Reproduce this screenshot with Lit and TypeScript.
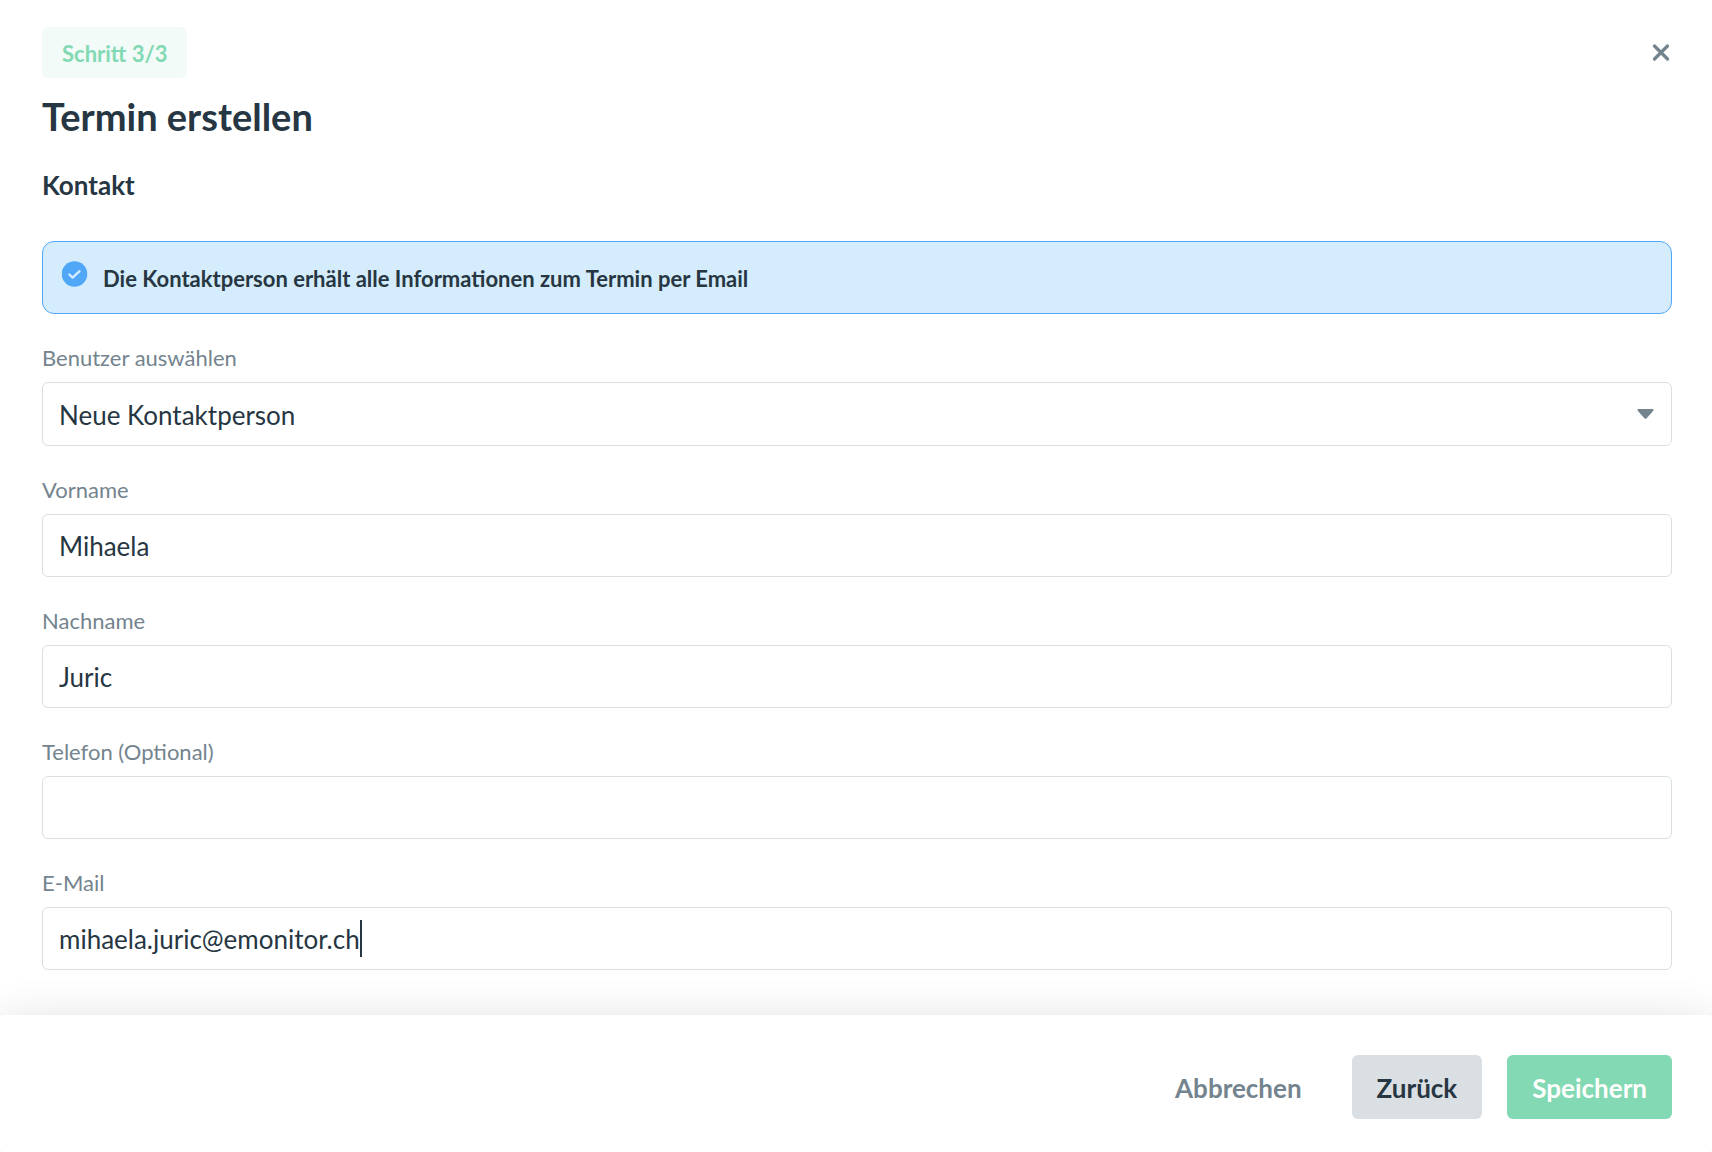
import { LitElement, html, css, nothing } from "lit";
import { customElement, property } from "lit/decorators.js";

@customElement("text-field")
class TextField extends LitElement {
  @property() label = "";
  @property() name = "";
  @property() type = "text";
  @property() value = "";
  @property({ type: Boolean }) active = false;

  static styles = css`
    :host {
      display: block;
    }
    .label {
      display: block;
      margin-bottom: 8px;
      font-size: 22px;
      line-height: 32px;
      color: #74848e;
    }
    .box {
      display: flex;
      align-items: center;
      box-sizing: border-box;
      height: 63px;
      padding: 0 16px;
      border: 1px solid #d9dfe3;
      border-radius: 6px;
      background: #fff;
    }
    .input {
      flex: 1;
      min-width: 0;
      padding: 0;
      border: 0;
      outline: 0;
      background: transparent;
      font: inherit;
      font-size: 26px;
      line-height: 36px;
      color: #263642;
    }
    .input.active {
      flex: 0 1 auto;
      field-sizing: content;
      caret-color: transparent;
    }
    .caret {
      flex: none;
      width: 2px;
      height: 37px;
      background: #263642;
    }
  `;

  render() {
    return html`
      <label class="label" for="control">${this.label}</label>
      <div class="box">
        <input
          id="control"
          class="input ${this.active ? "active" : ""}"
          type=${this.type}
          name=${this.name}
          .value=${this.value}
        />
        ${this.active ? html`<span class="caret"></span>` : nothing}
      </div>
    `;
  }
}

@customElement("app-root")
class AppRoot extends LitElement {
  static styles = css`
    :host {
      display: flex;
      flex-direction: column;
      min-height: 100vh;
      background: #fff;
      color: #263642;
      font-family: Lato, Carlito, "Open Sans", sans-serif;
    }
    .content {
      flex: 1;
      padding: 27px 40px 44px 42px;
    }
    .top {
      display: flex;
      justify-content: space-between;
      align-items: center;
    }
    .step {
      padding: 2px 20px 0;
      border-radius: 6px;
      background: #f2fbf8;
      color: #82d9b3;
      font-size: 22px;
      font-weight: 700;
      line-height: 49px;
    }
    .close {
      display: flex;
      padding: 0;
      border: 0;
      background: none;
      cursor: pointer;
    }
    .title {
      margin: 13px 0 0;
      font-size: 38px;
      font-weight: 700;
      line-height: 50px;
    }
    .subtitle {
      margin: 26px 0 0;
      font-size: 26px;
      font-weight: 700;
      line-height: 36px;
    }
    .notice {
      display: flex;
      align-items: flex-start;
      gap: 15px;
      margin-top: 38px;
      padding: 19px 19px 17px;
      border: 1px solid #50a7f8;
      border-radius: 12px;
      background: #d5ecfd;
      font-size: 22px;
      font-weight: 700;
      line-height: 35px;
    }
    .notice-icon {
      flex: none;
    }
    .form {
      display: grid;
      gap: 28px;
      margin-top: 28px;
    }
    .label {
      display: block;
      margin-bottom: 8px;
      font-size: 22px;
      line-height: 32px;
      color: #74848e;
    }
    .select-box {
      display: grid;
      align-items: center;
    }
    .select {
      grid-area: 1 / 1;
      appearance: none;
      width: 100%;
      height: 64px;
      padding: 2px 48px 0 16px;
      border: 1px solid #d9dfe3;
      border-radius: 6px;
      background: #fff;
      font: inherit;
      font-size: 26px;
      color: #263642;
    }
    .arrow {
      grid-area: 1 / 1;
      justify-self: end;
      margin-right: 18px;
      pointer-events: none;
    }
    .footer {
      display: flex;
      flex-wrap: wrap;
      justify-content: flex-end;
      gap: 25px;
      padding: 40px 40px 33px;
      border-radius: 4px;
      background: #fff;
      box-shadow: 0 0 40px rgba(0, 0, 0, 0.11);
    }
    .button {
      height: 64px;
      padding: 2px 25px 0;
      border: 0;
      border-radius: 6px;
      font: inherit;
      font-size: 26px;
      font-weight: 700;
      cursor: pointer;
    }
    .plain {
      background: none;
      color: #74848e;
    }
    .secondary {
      background: #dadfe3;
      color: #263642;
    }
    .primary {
      background: #82d9b3;
      color: #fff;
    }
  `;

  render() {
    return html`
      <main class="content">
        <div class="top">
          <span class="step">Schritt 3/3</span>
          <button class="close" type="button" aria-label="Schliessen">
            <svg width="22" height="22" viewBox="0 0 22 22">
              <path d="M4.5 4 17.5 17M17.5 4 4.5 17" stroke="#74848e" stroke-width="3.3" stroke-linecap="round" />
            </svg>
          </button>
        </div>
        <h1 class="title">Termin erstellen</h1>
        <h2 class="subtitle">Kontakt</h2>
        <div class="notice">
          <svg class="notice-icon" width="26" height="26" viewBox="0 0 26 26">
            <circle cx="12.5" cy="13" r="12.8" fill="#50a7f8" />
            <path d="M7.4 13.5 10.6 16.6 17.6 10.2" fill="none" stroke="#d5ecfd" stroke-width="2.3" stroke-linecap="round" stroke-linejoin="round" />
          </svg>
          <span>Die Kontaktperson erhält alle Informationen zum Termin per Email</span>
        </div>
        <form id="contact" class="form">
          <div>
            <label class="label" for="user">Benutzer auswählen</label>
            <div class="select-box">
              <select id="user" class="select" name="user">
                <option>Neue Kontaktperson</option>
              </select>
              <svg class="arrow" width="17" height="10" viewBox="0 0 17 10">
                <path d="M1.6 0H15.4Q17.2 .4 16.1 1.9L9.6 9.2Q8.5 10.3 7.4 9.2L.9 1.9Q-.2 .4 1.6 0Z" fill="#74848e" />
              </svg>
            </div>
          </div>
          <text-field label="Vorname" name="firstName" value="Mihaela"></text-field>
          <text-field label="Nachname" name="lastName" value="Juric"></text-field>
          <text-field label="Telefon (Optional)" name="phone" type="tel"></text-field>
          <text-field label="E-Mail" name="email" type="email" value="mihaela.juric@emonitor.ch" active></text-field>
        </form>
      </main>
      <footer class="footer">
        <button class="button plain" type="button">Abbrechen</button>
        <button class="button secondary" type="button">Zurück</button>
        <button class="button primary" type="submit" form="contact">Speichern</button>
      </footer>
    `;
  }
}
